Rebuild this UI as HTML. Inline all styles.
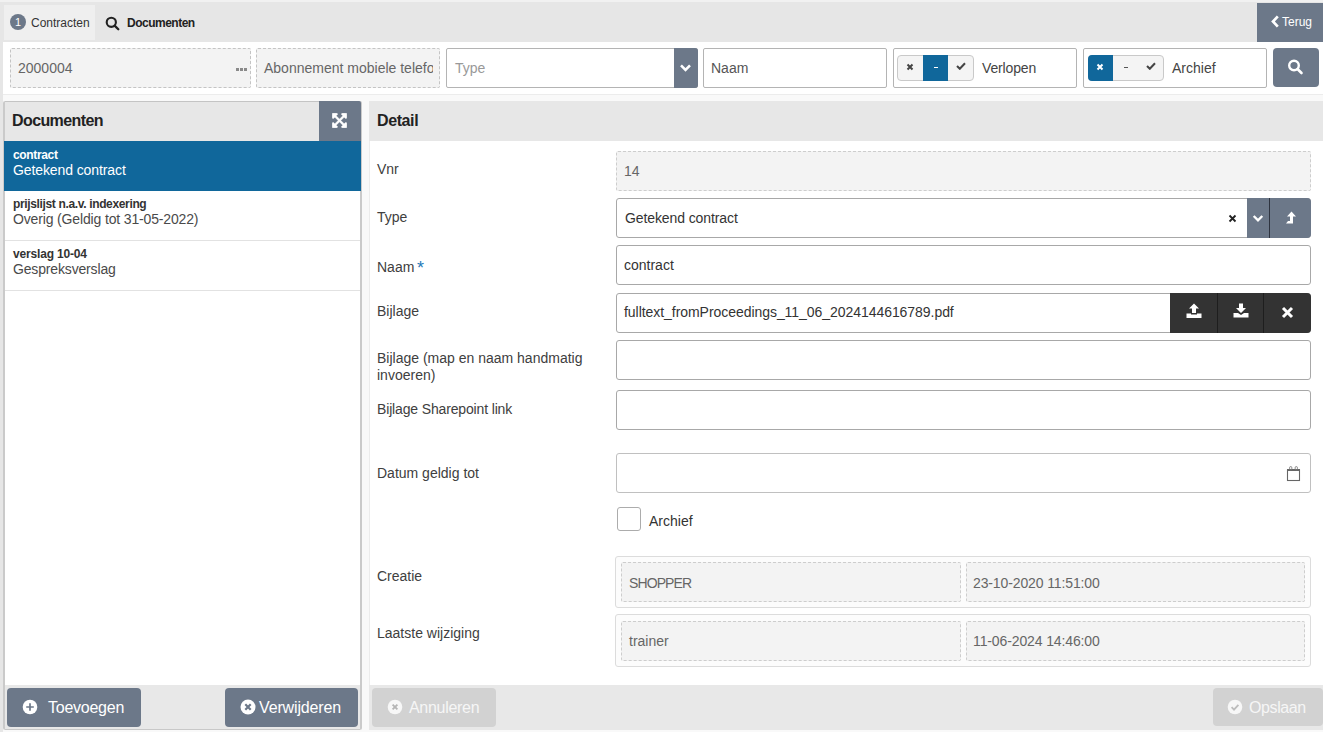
<!DOCTYPE html>
<html><head><meta charset="utf-8">
<style>
*{box-sizing:border-box;margin:0;padding:0}
html,body{width:1323px;height:732px;overflow:hidden}
body{background:#f9f9f9;font-family:"Liberation Sans",sans-serif;color:#333;position:relative;font-size:14px}
.a{position:absolute;white-space:nowrap}
.t{line-height:1}
.slate{background:#6c7889;color:#fff}
.dinp{border:1px dashed #c4c4c4;background:#f3f3f3;border-radius:2px}
.sinp{border:1px solid #b4b4b4;background:#fff;border-radius:2px}
.fld{border:1px solid #a8a8a8;background:#fff;border-radius:3px;left:616px;width:695px;height:40px}
.ro{border:1px dashed #cdcdcd;background:#f3f3f3;border-radius:2px}
.lbl{left:377px;font-size:14px;color:#404040;line-height:1}
.val{font-size:14px;color:#333;line-height:1}
.rov{font-size:14px;color:#666;line-height:1}
.btn{border-radius:4px}
.bt{font-size:16px;color:#fff;line-height:1}
.tri{border:1px solid #c9c9c9;border-radius:4px;background:#f4f4f4;width:77px;height:26px;top:55px}
</style></head><body>
<!-- top tab bar -->
<div class="a" style="left:0;top:0;width:3px;height:732px;background:#e6e6e6"></div>
<div class="a" style="left:0;top:0;width:1323px;height:2px;background:#f1f1f1"></div>
<div class="a" style="left:3px;top:2px;width:1320px;height:40px;background:#e6e6e6"></div>
<div class="a" style="left:4px;top:5px;width:91px;height:35px;background:#efefef"></div>
<div class="a" style="left:10px;top:14px;width:16px;height:16px;border-radius:50%;background:#6c7889"></div>
<div class="a t" style="left:15px;top:17px;font-size:11px;color:#fff">1</div>
<div class="a t" style="left:31px;top:17px;font-size:12px;color:#333">Contracten</div>
<svg class="a" style="left:105px;top:16px" width="15" height="15" viewBox="0 0 15 15"><circle cx="6.3" cy="6.3" r="4.6" fill="none" stroke="#222" stroke-width="2.1"/><line x1="9.6" y1="9.6" x2="13.3" y2="13.3" stroke="#222" stroke-width="2.3" stroke-linecap="round"/></svg>
<div class="a t" style="left:127px;top:17px;font-size:12px;font-weight:bold;color:#222;letter-spacing:-0.5px">Documenten</div>
<div class="a slate" style="left:1257px;top:3px;width:66px;height:39px"></div>
<svg class="a" style="left:1270px;top:15px" width="10" height="13" viewBox="0 0 10 13"><path d="M7.8 1.4 L3 6.5 L7.8 11.6" fill="none" stroke="#fff" stroke-width="2.7"/></svg>
<div class="a t" style="left:1282px;top:16px;font-size:12px;color:#fff">Terug</div>

<!-- filter row -->
<div class="a" style="left:3px;top:42px;width:1320px;height:53px;background:#fff;border-bottom:1px solid #ececec"></div>
<div class="a dinp" style="left:10px;top:48px;width:241px;height:40px"></div>
<div class="a t" style="left:18px;top:61px;font-size:14px;color:#666">2000004</div>
<div class="a" style="left:236px;top:68px;width:3px;height:3px;background:#8a8a8a"></div>
<div class="a" style="left:240px;top:68px;width:3px;height:3px;background:#8a8a8a"></div>
<div class="a" style="left:244px;top:68px;width:3px;height:3px;background:#8a8a8a"></div>
<div class="a dinp" style="left:256px;top:48px;width:184px;height:40px"></div><div class="a" style="left:258px;top:52px;width:175px;height:30px;overflow:hidden"><div class="a t" style="left:6px;top:9px;font-size:14px;color:#666">Abonnement mobiele telefoon</div></div>
<div class="a sinp" style="left:446px;top:48px;width:252px;height:40px"></div>
<div class="a t" style="left:455px;top:61px;font-size:14px;color:#999">Type</div>
<div class="a slate" style="left:674px;top:48px;width:24px;height:40px;border-radius:0 3px 3px 0"></div>
<svg class="a" style="left:679px;top:63px" width="13" height="10" viewBox="0 0 13 10"><path d="M2 2.3 L6.5 6.8 L11 2.3" fill="none" stroke="#fff" stroke-width="2.6"/></svg>
<div class="a sinp" style="left:703px;top:48px;width:184px;height:40px"></div>
<div class="a t" style="left:711px;top:61px;font-size:14px;color:#555">Naam</div>

<div class="a sinp" style="left:893px;top:48px;width:184px;height:40px"></div>
<div class="a tri" style="left:897px"></div>
<div class="a" style="left:923px;top:55px;width:25px;height:26px;background:#10679b"></div>
<svg class="a" style="left:906px;top:63px" width="8" height="8" viewBox="0 0 8 8"><path d="M1.5 1.5 L6.5 6.5 M6.5 1.5 L1.5 6.5" stroke="#444" stroke-width="2"/></svg>
<div class="a" style="left:934px;top:67px;width:4px;height:1px;background:#fff"></div>
<svg class="a" style="left:956px;top:62px" width="10" height="8" viewBox="0 0 10 8"><path d="M1 4 L3.8 6.8 L9 1.3" fill="none" stroke="#444" stroke-width="2"/></svg>
<div class="a t" style="left:982px;top:61px;font-size:14px;color:#444;letter-spacing:-0.15px">Verlopen</div>

<div class="a sinp" style="left:1083px;top:48px;width:184px;height:40px"></div>
<div class="a tri" style="left:1088px;width:76px"></div>
<div class="a" style="left:1088px;top:55px;width:25px;height:26px;background:#10679b;border-radius:4px 0 0 4px"></div>
<svg class="a" style="left:1096px;top:63px" width="8" height="8" viewBox="0 0 8 8"><path d="M1.5 1.5 L6.5 6.5 M6.5 1.5 L1.5 6.5" stroke="#fff" stroke-width="2"/></svg>
<div class="a" style="left:1124px;top:67px;width:4px;height:1px;background:#555"></div>
<svg class="a" style="left:1146px;top:62px" width="10" height="8" viewBox="0 0 10 8"><path d="M1 4 L3.8 6.8 L9 1.3" fill="none" stroke="#444" stroke-width="2"/></svg>
<div class="a t" style="left:1172px;top:61px;font-size:14px;color:#444">Archief</div>

<div class="a slate btn" style="left:1273px;top:48px;width:46px;height:39px"></div>
<svg class="a" style="left:1287px;top:58px" width="17" height="18" viewBox="0 0 17 18"><circle cx="7" cy="7.5" r="4.8" fill="none" stroke="#fff" stroke-width="2.4"/><line x1="10.5" y1="11" x2="14.5" y2="15" stroke="#fff" stroke-width="2.6" stroke-linecap="round"/></svg>

<!-- left panel -->
<div class="a" style="left:3px;top:101px;width:359px;height:629px;background:#fff;border:2px solid #cacaca;border-top:1px solid #c4c4c4;border-bottom:1px solid #c8c8c8;border-radius:2px"></div>
<div class="a" style="left:5px;top:102px;width:355px;height:39px;background:#e7e7e7"></div>
<div class="a t" style="left:12px;top:113px;font-size:16px;font-weight:bold;color:#222;letter-spacing:-0.6px">Documenten</div>
<div class="a slate" style="left:319px;top:101px;width:42px;height:40px;border-radius:0 2px 0 0"></div>
<svg class="a" style="left:332px;top:113px" width="15" height="15" viewBox="-10 22 468 468"><path fill="#fff" stroke="#fff" stroke-width="22" stroke-linejoin="round" d="M448 344v112a23.94 23.94 0 0 1-24 24H312c-21.39 0-32.09-25.9-17-41l36.2-36.2L224 295.6 116.77 402.9 153 439c15.09 15.1 4.39 41-17 41H24a23.94 23.94 0 0 1-24-24V344c0-21.4 25.89-32.1 41-17l36.19 36.2L184.46 256 77.18 148.7 41 185c-15.1 15.1-41 4.4-41-17V56a23.94 23.94 0 0 1 24-24h112c21.39 0 32.09 25.9 17 41l-36.2 36.2L224 216.4l107.23-107.3L295 73c-15.09-15.1-4.390-41 17-41h112a23.940 23.940 0 0 1 24 24v112c0 21.4-25.89 32.1-41 17l-36.19-36.2L263.54 256l107.28 107.3L407 327.1c15.1-15.2 41-4.5 41 16.9z"/></svg>

<div class="a" style="left:4px;top:141px;width:357px;height:50px;background:#10679b"></div>
<div class="a t" style="left:13px;top:149px;font-size:12px;font-weight:bold;color:#fff;letter-spacing:-0.35px">contract</div>
<div class="a t" style="left:13px;top:163px;font-size:14px;color:#fff;letter-spacing:-0.1px">Getekend contract</div>
<div class="a" style="left:5px;top:240px;width:355px;height:1px;background:#e2e2e2"></div>
<div class="a t" style="left:13px;top:198px;font-size:12px;font-weight:bold;color:#333;letter-spacing:-0.35px">prijslijst n.a.v. indexering</div>
<div class="a t" style="left:13px;top:212px;font-size:14px;color:#4a4a4a;letter-spacing:-0.15px">Overig (Geldig tot 31-05-2022)</div>
<div class="a" style="left:5px;top:290px;width:355px;height:1px;background:#e2e2e2"></div>
<div class="a t" style="left:13px;top:248px;font-size:12px;font-weight:bold;color:#333;letter-spacing:-0.17px">verslag 10-04</div>
<div class="a t" style="left:13px;top:262px;font-size:14px;color:#4a4a4a;letter-spacing:-0.16px">Gespreksverslag</div>

<div class="a" style="left:5px;top:685px;width:355px;height:44px;background:#e8e8e8"></div>
<div class="a slate btn" style="left:7px;top:688px;width:134px;height:39px"></div>
<svg class="a" style="left:22px;top:699px" width="16" height="16" viewBox="0 0 16 16"><circle cx="8" cy="8" r="7.3" fill="#fff"/><path d="M8 4.2 V11.8 M4.2 8 H11.8" stroke="#6c7889" stroke-width="1.7"/></svg>
<div class="a t bt" style="left:48px;top:700px;letter-spacing:-0.25px">Toevoegen</div>
<div class="a slate btn" style="left:225px;top:688px;width:133px;height:39px"></div>
<svg class="a" style="left:240px;top:699px" width="16" height="16" viewBox="0 0 16 16"><circle cx="8" cy="8" r="7.5" fill="#fff"/><path d="M5.3 5.3 L10.7 10.7 M10.7 5.3 L5.3 10.7" stroke="#6c7889" stroke-width="2.2"/></svg>
<div class="a t bt" style="left:259px;top:700px;letter-spacing:-0.15px">Verwijderen</div>

<!-- right panel -->
<div class="a" style="left:369px;top:101px;width:954px;height:629px;background:#fff;border-left:1px solid #ececec"></div>
<div class="a" style="left:369px;top:101px;width:954px;height:40px;background:#e7e7e7"></div>
<div class="a t" style="left:377px;top:113px;font-size:16px;font-weight:bold;color:#222;letter-spacing:-0.4px">Detail</div>

<div class="a lbl" style="top:162px">Vnr</div>
<div class="a fld ro" style="top:151px"></div>
<div class="a rov" style="left:624px;top:164px">14</div>

<div class="a lbl" style="top:210px">Type</div>
<div class="a fld" style="top:198px"></div>
<div class="a val" style="left:625px;top:211px;letter-spacing:-0.1px">Getekend contract</div>
<svg class="a" style="left:1228px;top:214px" width="9" height="9" viewBox="0 0 9 9"><path d="M1.5 1.5 L7.5 7.5 M7.5 1.5 L1.5 7.5" stroke="#222" stroke-width="1.8"/></svg>
<div class="a slate" style="left:1247px;top:198px;width:64px;height:40px;border-radius:0 4px 4px 0"></div>
<div class="a" style="left:1269px;top:198px;width:1px;height:40px;background:#2e3440"></div>
<svg class="a" style="left:1252px;top:214px" width="12" height="9" viewBox="0 0 12 9"><path d="M1.7 2 L6 6.3 L10.3 2" fill="none" stroke="#fff" stroke-width="2.4"/></svg>
<svg class="a" style="left:1285px;top:211px" width="12" height="14" viewBox="0 0 12 14"><path d="M6.5 0.5 L11 5.5 H8 V12.5 H1 L3 10 H5 V5.5 H2 Z" fill="#fff"/></svg>

<div class="a lbl" style="top:260px">Naam</div><div class="a t" style="left:417px;top:259px;color:#1f7ab8;font-size:18px">*</div>
<div class="a fld" style="top:245px"></div>
<div class="a val" style="left:624px;top:258px">contract</div>

<div class="a lbl" style="top:304px">Bijlage</div>
<div class="a fld" style="top:293px"></div>
<div class="a val" style="left:624px;top:305px;letter-spacing:-0.05px">fulltext_fromProceedings_11_06_2024144616789.pdf</div>
<div class="a" style="left:1170px;top:293px;width:141px;height:40px;background:#333;border-radius:0 4px 4px 0"></div>
<div class="a" style="left:1217px;top:293px;width:1px;height:40px;background:#1e1e1e"></div>
<div class="a" style="left:1263px;top:293px;width:1px;height:40px;background:#1e1e1e"></div>
<svg class="a" style="left:1186px;top:303px" width="16" height="16" viewBox="0 0 16 16"><g fill="#fff"><path d="M8 0.5 L13 5.5 H10 V10 H6 V5.5 H3 Z"/><path d="M0.5 10.5 H5 V11.5 H11 V10.5 H15.5 V15 H0.5 Z"/></g></svg>
<svg class="a" style="left:1233px;top:303px" width="16" height="16" viewBox="0 0 16 16"><g fill="#fff"><path d="M6 0.5 H10 V5 H13 L8 10 L3 5 H6 Z"/><path d="M0.5 10 H5 L8 12 L11 10 H15.5 V14.5 H0.5 Z"/></g></svg>
<svg class="a" style="left:1281px;top:306px" width="13" height="13" viewBox="0 0 13 13"><path d="M2 2 L11 11 M11 2 L2 11" stroke="#fff" stroke-width="3"/></svg>

<div class="a lbl" style="top:350px;line-height:17px">Bijlage (map en naam handmatig<br>invoeren)</div>
<div class="a fld" style="top:340px"></div>

<div class="a lbl" style="top:402px;letter-spacing:-0.15px">Bijlage Sharepoint link</div>
<div class="a fld" style="top:390px"></div>

<div class="a lbl" style="top:466px">Datum geldig tot</div>
<div class="a fld" style="top:453px;border-color:#c0c0c0"></div>
<svg class="a" style="left:1286px;top:465px" width="15" height="17" viewBox="0 0 15 17"><rect x="1.5" y="5" width="12" height="10.5" fill="none" stroke="#666" stroke-width="1.1"/><rect x="1" y="4" width="13" height="2" fill="#666"/><rect x="3.6" y="1.6" width="2.2" height="3.2" rx="1" fill="none" stroke="#777" stroke-width="0.9"/><rect x="9.2" y="1.6" width="2.2" height="3.2" rx="1" fill="none" stroke="#777" stroke-width="0.9"/></svg>

<div class="a" style="left:617px;top:507px;width:24px;height:24px;border:1px solid #acacac;border-radius:3px;background:#fff"></div>
<div class="a val" style="left:649px;top:514px">Archief</div>

<div class="a lbl" style="top:569px">Creatie</div>
<div class="a" style="left:615px;top:556px;width:696px;height:52px;border:1px solid #dcdcdc;border-radius:3px;background:#fcfcfc"></div>
<div class="a ro" style="left:621px;top:562px;width:340px;height:40px"></div>
<div class="a ro" style="left:966px;top:562px;width:339px;height:40px"></div>
<div class="a rov" style="left:629px;top:576px;letter-spacing:-0.9px">SHOPPER</div>
<div class="a rov" style="left:973px;top:576px;letter-spacing:-0.12px">23-10-2020 11:51:00</div>

<div class="a lbl" style="top:626px">Laatste wijziging</div>
<div class="a" style="left:615px;top:614px;width:696px;height:53px;border:1px solid #dcdcdc;border-radius:3px;background:#fcfcfc"></div>
<div class="a ro" style="left:621px;top:621px;width:340px;height:40px"></div>
<div class="a ro" style="left:966px;top:621px;width:339px;height:40px"></div>
<div class="a rov" style="left:629px;top:634px">trainer</div>
<div class="a rov" style="left:973px;top:634px;letter-spacing:-0.12px">11-06-2024 14:46:00</div>

<div class="a" style="left:369px;top:685px;width:954px;height:45px;background:#e8e8e8"></div>
<div class="a btn" style="left:372px;top:688px;width:124px;height:39px;background:#d2d2d2"></div>
<svg class="a" style="left:387px;top:699px" width="16" height="16" viewBox="0 0 16 16"><circle cx="8" cy="8" r="7.3" fill="#f7f7f7"/><path d="M5.6 5.6 L10.4 10.4 M10.4 5.6 L5.6 10.4" stroke="#b5b5b5" stroke-width="1.8"/></svg>
<div class="a t bt" style="left:409px;top:700px;color:#f6f6f6;letter-spacing:-0.3px">Annuleren</div>
<div class="a btn" style="left:1213px;top:688px;width:110px;height:38px;background:#d2d2d2"></div>
<svg class="a" style="left:1227px;top:699px" width="16" height="16" viewBox="0 0 16 16"><circle cx="8" cy="8" r="7.3" fill="#f7f7f7"/><path d="M4.6 8.2 L7 10.6 L11.4 5.8" fill="none" stroke="#bdbdbd" stroke-width="1.8"/></svg>
<div class="a t bt" style="left:1249px;top:700px;color:#f6f6f6;letter-spacing:-0.4px">Opslaan</div>
</body></html>
